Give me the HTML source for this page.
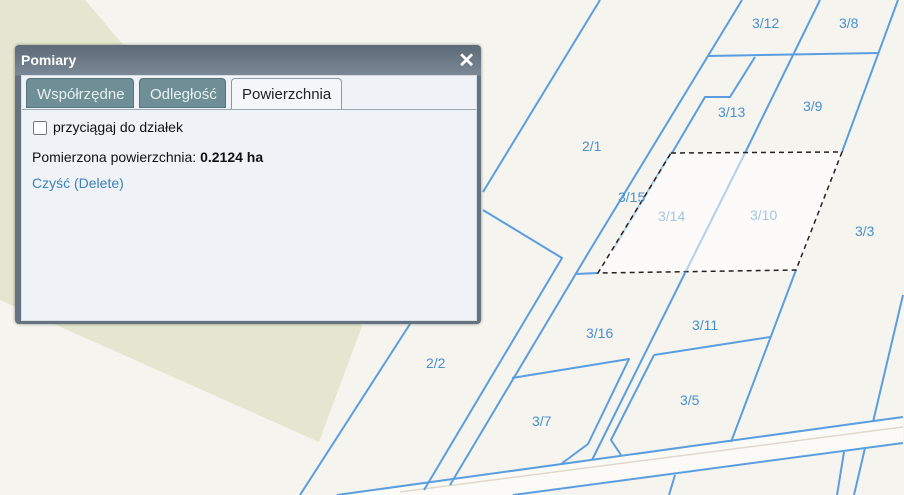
<!DOCTYPE html>
<html><head><style>
body{margin:0;width:904px;height:495px;overflow:hidden;background:#f6f4ee;font-family:"Liberation Sans",sans-serif;position:relative}
svg{position:absolute;left:0;top:0}
.lb{font-size:14px;fill:#4a90d0}
#dlg{position:absolute;left:15px;top:45px;width:466px;height:279px;background:linear-gradient(#5d6a78,#7a8794 30px,#65727f 31px);border-radius:4px;box-shadow:0 0 3px rgba(0,0,0,.4)}
#ttl{position:absolute;left:6px;top:7px;color:#fff;font-weight:bold;font-size:14px}
#x{position:absolute;right:6px;top:3px;color:#fff;font-weight:bold;font-size:20px}
#body{position:absolute;left:6px;top:30px;width:454px;height:244px;background:#eff3f8;border:1px solid #d6dde5}
.tab{position:absolute;top:2px;height:30px;border-radius:4px 4px 0 0;font-size:15px;line-height:32px;padding:0 10px;box-sizing:border-box}
.in{background:#6e8f95;color:#e8f0f2;border:1px solid #56737a}
.act{background:#f4f7fa;color:#222;border:1px solid #8a9aa5;border-bottom:none;height:32px}
#line{position:absolute;left:0;top:33px;width:454px;border-top:1px solid #9aa8b2}
.t{position:absolute;font-size:14px;color:#111}
</style></head><body>
<svg width="904" height="495" viewBox="0 0 904 495">
<polygon points="0,0 85,0 362,326 319,442 0,300" fill="#e5e6cf"/>
<polygon points="337,495 903,417 903,443 513,495" fill="#fbfaf7"/>
<line x1="400" y1="492" x2="903" y2="427" stroke="#e0d8cc" stroke-width="1.5"/>
<g stroke="#5a9ee0" stroke-width="2" fill="none" stroke-linejoin="round">
<line x1="337" y1="495" x2="903" y2="417"/>
<line x1="513" y1="495" x2="903" y2="443"/>
<line x1="600" y1="0" x2="483" y2="192"/>
<polyline points="483,210 562,258 424,490"/>
<line x1="410" y1="324" x2="300" y2="495"/>
<polyline points="742,0 590,250 450,485"/>
<line x1="575" y1="274" x2="598" y2="273"/>
<line x1="708" y1="56" x2="878" y2="53"/>
<line x1="820" y1="0" x2="745" y2="153"/>
<line x1="898" y1="0" x2="842" y2="152"/>
<polyline points="755,57 730,97 705,97 672,153"/>
<line x1="671" y1="153" x2="613" y2="250"/>
<line x1="685" y1="273" x2="592" y2="460"/>
<polyline points="654,355 611,440 621,455"/>
<line x1="654" y1="355" x2="770" y2="337"/>
<line x1="796" y1="270" x2="731" y2="442"/>
<polyline points="512,378 629,359 588,444 561,464"/>
<line x1="903" y1="295" x2="873" y2="422"/>
<line x1="675" y1="475" x2="669" y2="495"/>
<line x1="844" y1="452" x2="837" y2="495"/>
<line x1="865" y1="448" x2="854" y2="495"/>
</g>
<polygon points="671,153 842,152 796,270 598,273" fill="#ffffff" fill-opacity=".65" stroke="#222" stroke-width="1.5" stroke-dasharray="5,4"/>
<line x1="745" y1="153" x2="685" y2="273" stroke="#5a9ee0" stroke-opacity=".45" stroke-width="2"/>
<text class="lb" x="752" y="28">3/12</text><text class="lb" x="839" y="28">3/8</text>
<text class="lb" x="718" y="117">3/13</text><text class="lb" x="803" y="111">3/9</text>
<text class="lb" x="582" y="151">2/1</text><text class="lb" x="618" y="202">3/15</text>
<text class="lb" x="658" y="221" fill-opacity=".5">3/14</text><text class="lb" x="750" y="220" fill-opacity=".5">3/10</text>
<text class="lb" x="855" y="236">3/3</text><text class="lb" x="586" y="338">3/16</text>
<text class="lb" x="692" y="330">3/11</text><text class="lb" x="426" y="368">2/2</text>
<text class="lb" x="680" y="405">3/5</text><text class="lb" x="532" y="426">3/7</text>
</svg>
<div id="dlg">
<div id="ttl">Pomiary</div><div id="x">✕</div>
<div id="body">
<div class="tab in" style="left:4px;width:108px">Współrzędne</div>
<div class="tab in" style="left:117px;width:87px">Odległość</div>
<div class="tab act" style="left:209px;width:111px">Powierzchnia</div>
<div id="line"></div>
<div style="position:absolute;left:11px;top:45px;width:12px;height:12px;border:1px solid #777;border-radius:2px;background:#fff"></div>
<div class="t" style="left:31px;top:43px">przyciągaj do działek</div>
<div class="t" style="left:10px;top:73px">Pomierzona powierzchnia: <b>0.2124 ha</b></div>
<div class="t" style="left:10px;top:99px;color:#3b82bd">Czyść (Delete)</div>
</div></div>
</body></html>
